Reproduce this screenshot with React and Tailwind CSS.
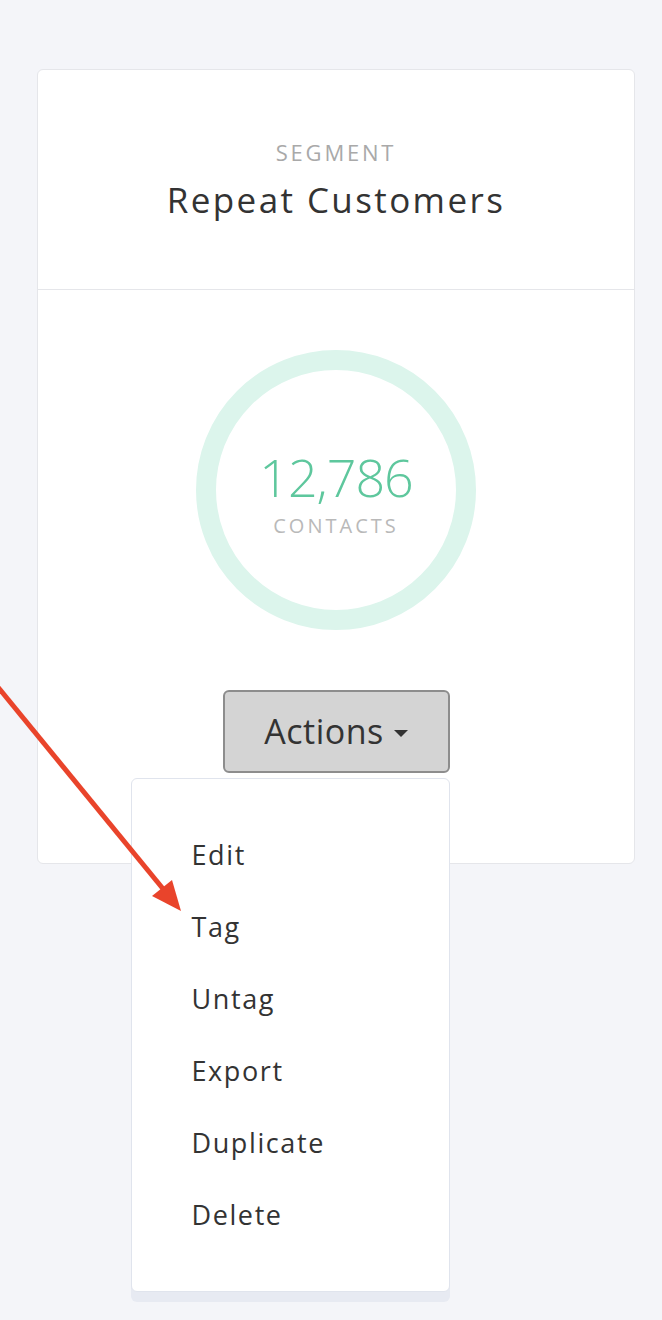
export default function App() {
  const items = ["Edit", "Tag", "Untag", "Export", "Duplicate", "Delete"];

  return (
    <div className="relative min-h-[1320px] overflow-hidden bg-[#f4f5f9] font-['Open_Sans',sans-serif] text-[#333]">
      <div className="pt-[69px] pl-[37px]">
        {/* Segment card */}
        <div className="w-[598px] rounded-md border border-[#e5e6ea] bg-white">
          <div className="flex h-[220px] flex-col items-center justify-center gap-[16px] border-b border-[#e5e6ea]">
            <p className="text-[22px] leading-[24px] tracking-[2.8px] text-[#a9a9a9]">SEGMENT</p>
            <h2 className="text-[35px] leading-[40px] tracking-[2.4px] text-[#333]">Repeat Customers</h2>
          </div>

          <div className="flex flex-col items-center pt-[60px] pb-[90px]">
            <div className="flex h-[280px] w-[280px] flex-col items-center justify-center rounded-full border-[20px] border-[#dcf5ec]">
              <p className="text-[52px] font-light leading-[71px] tracking-[-1px] text-[#5ec79d]">12,786</p>
              <p className="text-[20px] leading-[28px] tracking-[3px] text-[#b9b9b9]">CONTACTS</p>
            </div>

            <div className="relative mt-[60px]">
              <button className="flex h-[83px] w-[227px] items-center justify-center gap-[10px] rounded-md border-2 border-[#8d8d8d] bg-[#d4d4d4] text-[34px] tracking-[0.5px] text-[#333]">
                Actions
                <span className="mt-[4px] h-0 w-0 border-x-[7px] border-t-[7px] border-x-transparent border-t-[#333]"></span>
              </button>

              {/* Dropdown */}
              <div className="absolute right-0 top-[88px] z-10 w-[319px] rounded-md border border-[#e0e4ed] bg-white py-[40px] pl-[60px] shadow-[0_10px_0_0_#e7eaf2]">
                {items.map((item) => (
                  <div key={item} className="flex h-[72px] items-center text-[27px] tracking-[1.6px] text-[#333]">
                    {item}
                  </div>
                ))}
              </div>
            </div>
          </div>
        </div>
      </div>

      {/* Annotation arrow */}
      <svg className="pointer-events-none absolute inset-0 z-20" width="662" height="1320" viewBox="0 0 662 1320">
        <line x1="-12" y1="675" x2="164" y2="890" stroke="#e9442b" strokeWidth="5" />
        <polygon points="181,911 152,896 172,880" fill="#e9442b" />
      </svg>
    </div>
  );
}
